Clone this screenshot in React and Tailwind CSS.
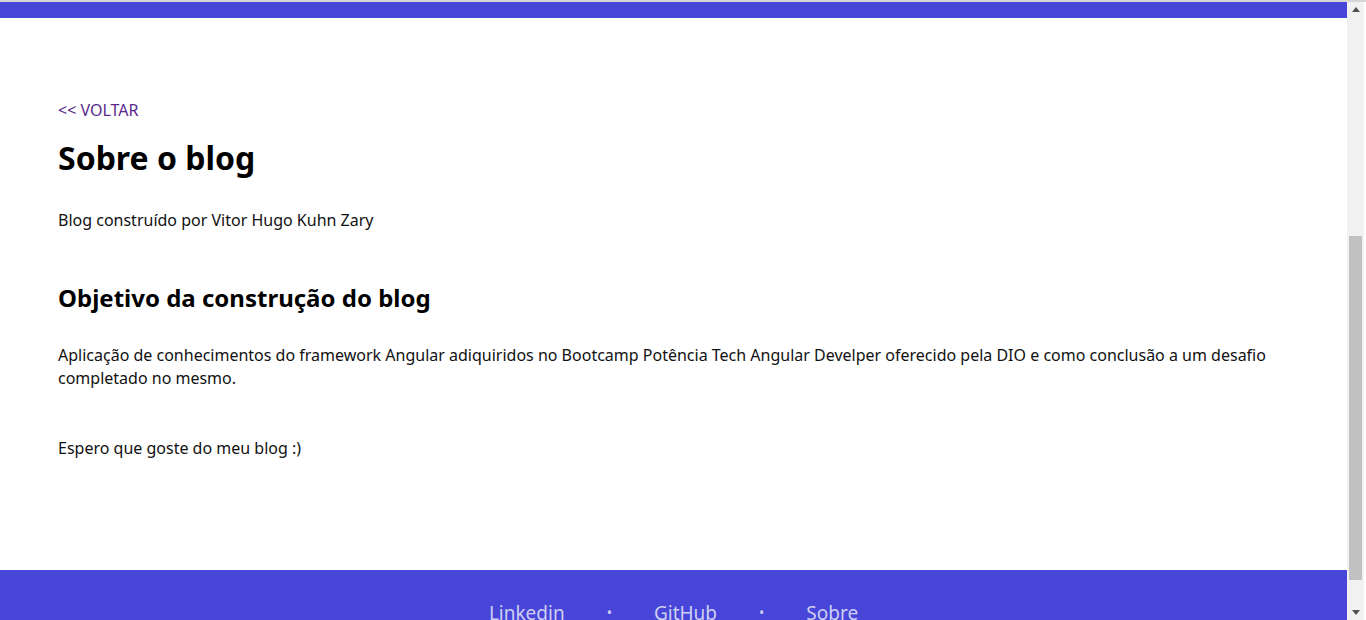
import React from "react";

const links = ["Linkedin", "GitHub", "Sobre"];

// classic browser scrollbar as it appears in the reference (page scrolled down)
const Scrollbar = () => (
  <div className="w-[17px] bg-[#f1f1f1] flex flex-col">
    <div className="h-[15px] flex items-center justify-center">
      <svg width="8" height="5" viewBox="0 0 8 5">
        <polygon points="4,0 8,5 0,5" fill="#505050" />
      </svg>
    </div>
    <div className="flex-1 px-[2px]">
      <div className="mt-[219px] h-[344px] bg-[#c1c1c1]" />
    </div>
    <div className="h-[15px] flex items-center justify-center">
      <svg width="8" height="5" viewBox="0 0 8 5">
        <polygon points="0,0 8,0 4,5" fill="#505050" />
      </svg>
    </div>
  </div>
);

const App = () => {
  return (
    <div className="h-screen overflow-hidden flex flex-col bg-white font-['Noto_Sans',sans-serif] text-[#111]">
      <div className="h-[2px] bg-[#d6d6d6]" />
      <div className="flex flex-1 min-h-0">
        <div className="flex-1 flex flex-col overflow-hidden">
          <div className="h-[16px] shrink-0 bg-[#4846d9]" />

          {/* Sobre */}
          <main className="px-[58px] pt-[81px] pb-[111px]">
            <a href="#" className="block text-base leading-[22px] text-[#5a2a8c]">
              &lt;&lt; VOLTAR
            </a>
            <h1 className="mt-[15px] text-[32px] leading-[44px] font-bold text-black">
              Sobre o blog
            </h1>
            <p className="mt-[29px] text-base leading-[22px]">
              Blog construído por Vitor Hugo Kuhn Zary
            </p>
            <h2 className="mt-[50px] text-[24px] leading-[33px] font-bold text-black">
              Objetivo da construção do blog
            </h2>
            <p className="mt-[30px] text-base leading-[23px]">
              Aplicação de conhecimentos do framework Angular adiquiridos no Bootcamp Potência Tech Angular Develper oferecido pela DIO e como conclusão a um desafio completado no mesmo.
            </p>
            <p className="mt-[47px] text-base leading-[22px]">
              Espero que goste do meu blog :)
            </p>
          </main>

          <footer className="h-[91px] shrink-0 bg-[#4846d9] flex justify-center items-start pt-[30px]">
            <ul className="flex items-center gap-[42px] text-[19px] leading-[26px] text-[#cfcff2]">
              {links.map((link, index) => (
                <React.Fragment key={link}>
                  {index > 0 && <li className="text-[14px]">•</li>}
                  <li>
                    <a href="#">{link}</a>
                  </li>
                </React.Fragment>
              ))}
            </ul>
          </footer>
        </div>
        <Scrollbar />
        <div className="w-[2px] bg-white" />
      </div>
    </div>
  );
};

export default App;
